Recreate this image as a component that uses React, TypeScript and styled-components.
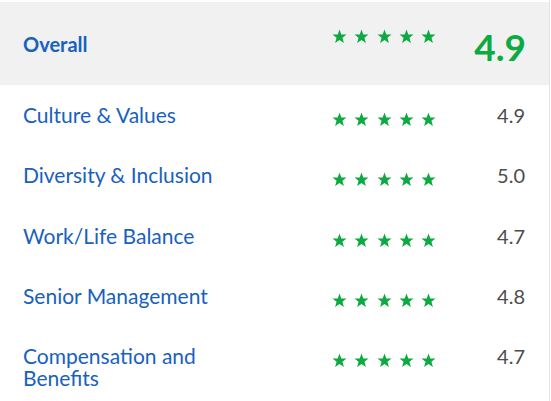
import styled, { createGlobalStyle } from 'styled-components'

interface IRating {
  label: string
  score: string
}

const ratings: IRating[] = [
  { label: 'Culture & Values', score: '4.9' },
  { label: 'Diversity & Inclusion', score: '5.0' },
  { label: 'Work/Life Balance', score: '4.7' },
  { label: 'Senior Management', score: '4.8' },
  { label: 'Compensation and Benefits', score: '4.7' },
]

const Star = () => (
  <svg width="15" height="15" viewBox="0 0 24 24" aria-hidden="true">
    <polygon
      fill="#0caa41"
      points="12,0.8 14.9,8.6 23.2,8.9 16.7,14.1 19,22.2 12,17.5 5,22.2 7.3,14.1 0.8,8.9 9.1,8.6"
    />
  </svg>
)

const StarList = ({ isTop }: { isTop?: boolean }) => (
  <Stars isTop={isTop}>
    {[0, 1, 2, 3, 4].map((i) => (
      <Star key={i} />
    ))}
  </Stars>
)

const App = () => {
  return (
    <>
      <GlobalStyle />
      <Panel>
        <OverallRow>
          <OverallLabel>Overall</OverallLabel>
          <StarList isTop />
          <OverallScore>4.9</OverallScore>
        </OverallRow>
        {ratings.map((item) => (
          <Row key={item.label}>
            <Label>{item.label}</Label>
            <StarList />
            <Score>{item.score}</Score>
          </Row>
        ))}
      </Panel>
    </>
  )
}

const GlobalStyle = createGlobalStyle`
  body {
    margin: 0;
    background: #fff;
    font-family: Lato, 'Liberation Sans', sans-serif;
  }
`

const Panel = styled.div`
  width: 550px;
  height: 401px;
  box-sizing: border-box;
  padding-top: 2px;
  border-right: 1px solid #e4e4e4;
  overflow: hidden;
`

const RowBase = styled.div`
  display: grid;
  grid-template-columns: 1fr 120px 73px;
  padding: 0 24px 0 23px;
`

const OverallRow = styled(RowBase)`
  background: #f1f1f1;
  height: 83px;
  align-items: center;
  padding-right: 23px;
  grid-template-columns: 1fr 120px 74px;
`

const Row = styled(RowBase)`
  align-items: start;
  height: 60px;
  box-sizing: border-box;
  padding-top: 19px;
  &:nth-child(n + 4) {
    padding-top: 20px;
  }
  &:last-child {
    height: auto;
  }
`

const OverallLabel = styled.div`
  color: #1861bf;
  font-size: 20px;
  font-weight: 700;
  line-height: 24px;
`

const Label = styled.div`
  color: #1861bf;
  font-size: 21px;
  line-height: 22px;
  max-width: 230px;
`

const Stars = styled.div<{ isTop?: boolean }>`
  display: flex;
  gap: 7.3px;
  align-self: ${(props) => (props.isTop ? 'start' : 'auto')};
  margin-top: ${(props) => (props.isTop ? '27px' : '8px')};
  svg {
    display: block;
  }
`

const OverallScore = styled.div`
  color: #0caa41;
  font-size: 37px;
  font-weight: 700;
  line-height: 1;
  text-align: right;
  margin-top: 6px;
`

const Score = styled.div`
  color: #4d4d4d;
  font-size: 20px;
  line-height: 22px;
  text-align: right;
`

export default App
